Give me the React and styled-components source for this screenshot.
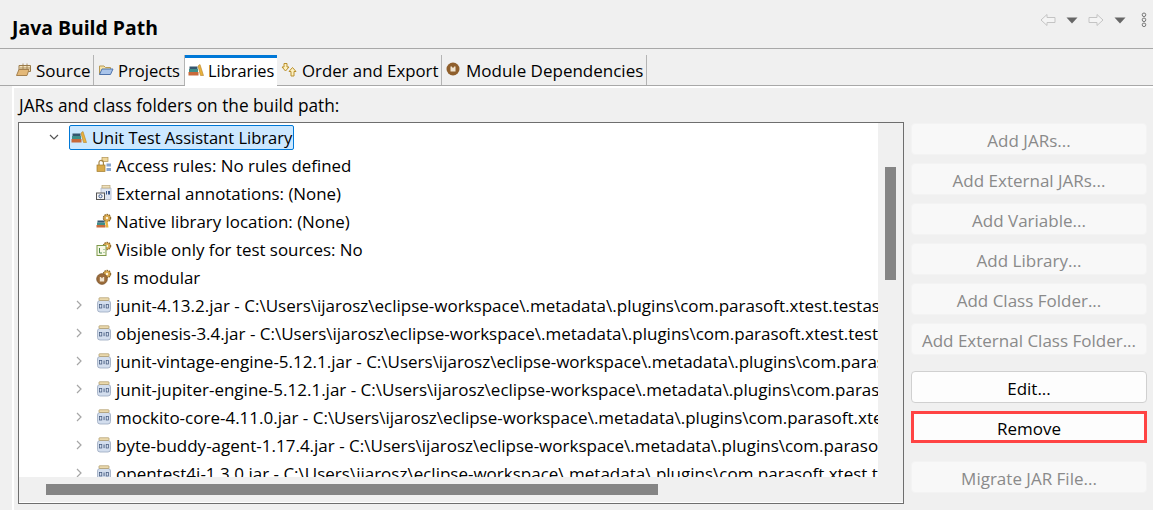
import React from "react";
import styled, { createGlobalStyle } from "styled-components";

const GlobalStyle = createGlobalStyle`
    html, body {
        margin: 0;
        padding: 0;
        background: #f0f0f0;
    }
    body {
        font-family: "Open Sans", "Noto Sans", sans-serif;
        color: #000;
    }
`;

// icons
const BooksIcon = () => (
    <svg width="16" height="16" viewBox="0 0 16 16">
        <rect x="0.5" y="10" width="10" height="3.5" fill="#c8693a" />
        <rect x="1" y="7" width="9" height="3" fill="#3f8f8a" />
        <rect x="1.5" y="4.5" width="8" height="2.5" fill="#35566f" />
        <path d="M10 4 L12 2.5 L15.5 13.5 L12.5 13.5 Z" fill="#e9b23c" stroke="#b5822a" strokeWidth="0.6" />
    </svg>
);

const SourceIcon = () => (
    <svg width="16" height="16" viewBox="0 0 16 16">
        <path d="M3 3.5 H14.5 V9.5 H3 Z" fill="#f6e3bd" stroke="#9a7b4a" />
        <path d="M7 1.5 V7 M11 1.5 V7 M4 6 H14" stroke="#9a7b4a" strokeWidth="0.8" />
        <path d="M0.5 13.5 L3 7.5 H13 L11 13.5 Z" fill="#e3b878" stroke="#a5814f" />
    </svg>
);

const FolderIcon = () => (
    <svg width="16" height="16" viewBox="0 0 16 16">
        <path d="M1.5 12.5 V4 H6 L7.5 5.5 H12.5 V7" fill="#f6e3a8" stroke="#b99a52" />
        <path d="M1.5 12.5 L4 7 H15 L12.5 12.5 Z" fill="#a9c4ea" stroke="#4f74ac" />
    </svg>
);

const OrderIcon = () => (
    <svg width="17" height="16" viewBox="0 0 17 16">
        <path d="M3 1.5 H6 V5 H8 L4.5 9 L1 5 H3 Z" fill="#fdf0bf" stroke="#b98f2c" />
        <path d="M11.5 5.5 L15 9.5 H13 V14 H10 V9.5 H8 Z" fill="#fdf0bf" stroke="#b98f2c" />
    </svg>
);

const ModuleIcon = () => (
    <svg width="16" height="16" viewBox="0 0 16 16">
        <circle cx="7" cy="7" r="6.5" fill="#8f5f2c" />
        <path d="M4.5 9.5 V4.5 H5.8 L7 6.2 L8.2 4.5 H9.5 V9.5" fill="#efe3cf" />
    </svg>
);

const GearBadge = () => (
    <g>
        <circle cx="11" cy="5" r="3.6" fill="#d9a94e" stroke="#8f6c31" strokeWidth="1.3" strokeDasharray="1.5 0.8" />
        <circle cx="11" cy="5" r="1.2" fill="#fff6df" />
    </g>
);

const RulesIcon = () => (
    <svg width="16" height="16" viewBox="0 0 16 16">
        <rect x="6" y="0.5" width="6" height="4" fill="#f0d79a" stroke="#b09252" strokeWidth="0.7" />
        <rect x="10.5" y="6.5" width="4.5" height="3" fill="#8aa6cf" />
        <rect x="10.5" y="11" width="4.5" height="3" fill="#8aa6cf" />
        <path d="M3 8 V5.5 A2.2 2.2 0 0 1 7.4 5.5 V8" fill="none" stroke="#a8894b" strokeWidth="1.2" />
        <rect x="1" y="8" width="8" height="6.5" fill="#d9aa4a" stroke="#a27c2e" strokeWidth="0.7" />
    </svg>
);

const AnnotationIcon = () => (
    <svg width="16" height="16" viewBox="0 0 16 16">
        <path d="M5 3 H15 V14.5 H5 Z" fill="#dfe6f2" stroke="#aeb9cc" strokeWidth="0.8" />
        <rect x="6" y="0.5" width="8" height="2.5" fill="#efe0bb" stroke="#bba676" strokeWidth="0.7" />
        <rect x="10" y="6" width="1" height="3.5" fill="#39568a" />
        <rect x="12" y="6" width="2" height="3.5" fill="#39568a" />
        <rect x="0.5" y="8" width="8" height="6.5" fill="#f4f4f4" stroke="#555" strokeWidth="1" />
        <circle cx="4.5" cy="11.2" r="1.6" fill="none" stroke="#39568a" strokeWidth="0.9" />
    </svg>
);

const NativeIcon = () => (
    <svg width="16" height="16" viewBox="0 0 16 16">
        <GearBadge />
        <rect x="0.5" y="12" width="9" height="2.5" fill="#c8693a" />
        <rect x="1" y="9.5" width="8" height="2.5" fill="#3f8f8a" />
        <rect x="1.5" y="7.5" width="7" height="2" fill="#35566f" />
        <path d="M9 8.5 L11.5 8 L12.5 14.5 L10 14.5 Z" fill="#e9b23c" />
    </svg>
);

const VisibleIcon = () => (
    <svg width="16" height="16" viewBox="0 0 16 16">
        <GearBadge />
        <rect x="1" y="4.5" width="9" height="10" fill="#f7f8e6" stroke="#7f9a4b" />
        <path d="M3.5 7 V12 H6 M8 8 V8.8 M8 11 V11.8" stroke="#4d8a4a" fill="none" />
    </svg>
);

const ModularIcon = () => (
    <svg width="16" height="16" viewBox="0 0 16 16">
        <GearBadge />
        <circle cx="6" cy="10" r="5.4" fill="#9a6b3a" stroke="#6e4a25" strokeWidth="0.6" />
        <path d="M3.8 12.5 V8 H5 L6 9.5 L7 8 H8.2 V12.5" fill="#efe3cf" />
    </svg>
);

const JarIcon = () => (
    <svg width="16" height="16" viewBox="0 0 16 16">
        <rect x="1.5" y="3.5" width="13" height="11.5" rx="2.5" fill="#d3deee" stroke="#9aa8bf" strokeWidth="0.8" />
        <rect x="3" y="0.8" width="10" height="2.6" rx="0.6" fill="#f0dfb4" stroke="#a8925e" strokeWidth="0.7" />
        <rect x="3.6" y="7.6" width="2.2" height="3.4" fill="none" stroke="#3d5378" strokeWidth="0.7" />
        <rect x="7.6" y="7.5" width="0.9" height="3.6" fill="#3d5378" />
        <rect x="10.2" y="7.6" width="2.2" height="3.4" fill="none" stroke="#3d5378" strokeWidth="0.7" />
    </svg>
);

const Chevron = ({ open }) => (
    <svg width="10" height="10" viewBox="0 0 10 10">
        <path
            d={open ? "M1 3 L5 7 L9 3" : "M3 1 L7 5 L3 9"}
            fill="none"
            stroke={open ? "#555" : "#a6a6a6"}
            strokeWidth="1.2"
        />
    </svg>
);

const ArrowLeft = () => (
    <svg width="16" height="14" viewBox="0 0 16 14">
        <path d="M1 7 L7 1.5 V4.5 H15 V9.5 H7 V12.5 Z" fill="#f4f4f4" stroke="#c4c4c4" />
    </svg>
);

const ArrowRight = () => (
    <svg width="16" height="14" viewBox="0 0 16 14">
        <path d="M15 7 L9 1.5 V4.5 H1 V9.5 H9 V12.5 Z" fill="#f4f4f4" stroke="#c4c4c4" />
    </svg>
);

const Caret = () => (
    <svg width="12" height="7" viewBox="0 0 12 7">
        <path d="M0.5 0.5 H11.5 L6 6.5 Z" fill="#666" />
    </svg>
);

const MoreIcon = () => (
    <svg width="6" height="16" viewBox="0 0 6 16">
        <circle cx="3" cy="2.8" r="1.8" fill="none" stroke="#777" />
        <circle cx="3" cy="7.8" r="1.8" fill="none" stroke="#777" />
        <circle cx="3" cy="12.8" r="1.8" fill="none" stroke="#777" />
    </svg>
);

// data
const tabs = [
    { label: "Source", icon: <SourceIcon />, width: 82, size: 17 },
    { label: "Projects", icon: <FolderIcon />, width: 91, size: 16.6 },
    { label: "Libraries", icon: <BooksIcon />, width: 92, size: 16.4, active: true },
    { label: "Order and Export", icon: <OrderIcon />, width: 165, size: 16.8 },
    { label: "Module Dependencies", icon: <ModuleIcon />, width: 205, size: 17 },
];

const attributes = [
    { label: "Access rules: No rules defined", icon: <RulesIcon /> },
    { label: "External annotations: (None)", icon: <AnnotationIcon /> },
    { label: "Native library location: (None)", icon: <NativeIcon /> },
    { label: "Visible only for test sources: No", icon: <VisibleIcon /> },
    { label: "Is modular", icon: <ModularIcon /> },
];

const base = "C:\\Users\\ijarosz\\eclipse-workspace\\.metadata\\.plugins\\com.parasoft.xtest.testassistant\\lib";
const jars = [
    "junit-4.13.2.jar",
    "objenesis-3.4.jar",
    "junit-vintage-engine-5.12.1.jar",
    "junit-jupiter-engine-5.12.1.jar",
    "mockito-core-4.11.0.jar",
    "byte-buddy-agent-1.17.4.jar",
    "opentest4j-1.3.0.jar",
];

const App = () => {
    return (
        <Page>
            <GlobalStyle />
            <Header>
                <Title>Java Build Path</Title>
                <HeaderTools>
                    <ArrowLeft />
                    <Caret />
                    <ArrowRight />
                    <Caret />
                    <MoreWrap>
                        <MoreIcon />
                    </MoreWrap>
                </HeaderTools>
            </Header>
            <TabStrip>
                {tabs.map((tab) => (
                    <Tab key={tab.label} $active={tab.active} $width={tab.width} $size={tab.size}>
                        <TabIcon>{tab.icon}</TabIcon>
                        {tab.label}
                    </Tab>
                ))}
            </TabStrip>
            <Panel>
                <Caption>JARs and class folders on the build path:</Caption>
                <Columns>
                    <TreeBox>
                        <TreeRows>
                            <Row>
                                <Expander $left={30} $right={10}>
                                    <Chevron open />
                                </Expander>
                                <Selection>
                                    <BooksIcon />
                                    Unit Test Assistant Library
                                </Selection>
                            </Row>
                            {attributes.map((item) => (
                                <ChildRow key={item.label}>
                                    <RowIcon>{item.icon}</RowIcon>
                                    {item.label}
                                </ChildRow>
                            ))}
                            {jars.map((jar) => (
                                <JarRow key={jar}>
                                    <Expander $left={55} $right={12}>
                                        <Chevron />
                                    </Expander>
                                    <RowIcon>
                                        <JarIcon />
                                    </RowIcon>
                                    {jar} - {base}
                                </JarRow>
                            ))}
                        </TreeRows>
                        <VerticalTrack>
                            <VerticalThumb />
                        </VerticalTrack>
                        <HorizontalTrack>
                            <HorizontalThumb />
                        </HorizontalTrack>
                        <Corner />
                    </TreeBox>
                    <ButtonColumn>
                        <ActionButton disabled>Add JARs...</ActionButton>
                        <ActionButton disabled>Add External JARs...</ActionButton>
                        <ActionButton disabled>Add Variable...</ActionButton>
                        <ActionButton disabled>Add Library...</ActionButton>
                        <ActionButton disabled>Add Class Folder...</ActionButton>
                        <ActionButton disabled>Add External Class Folder...</ActionButton>
                        <ActionButton $gap={8}>Edit...</ActionButton>
                        <ActionButton $outlined>Remove</ActionButton>
                        <ActionButton disabled $gap={10}>Migrate JAR File...</ActionButton>
                    </ButtonColumn>
                </Columns>
            </Panel>
        </Page>
    );
};
export default App;

const Page = styled.div`
    width: 1153px;
    height: 510px;
    overflow: hidden;
    background: #f0f0f0;
    display: flex;
    flex-direction: column;
`;

const Header = styled.div`
    height: 48px;
    flex: none;
    box-sizing: content-box;
    border-bottom: 1px solid #a8a8a8;
    padding: 0 6px 0 12px;
    display: flex;
    align-items: center;
    justify-content: space-between;
`;

const Title = styled.div`
    font-size: 19.4px;
    font-weight: 700;
    padding-top: 6px;
`;

const HeaderTools = styled.div`
    display: flex;
    align-items: center;
    gap: 10px;
    margin-bottom: 8px;
`;

const MoreWrap = styled.span`
    display: flex;
    margin-left: 5px;
`;

const TabStrip = styled.div`
    height: 30px;
    margin-top: 6px;
    padding-left: 12px;
    flex: none;
    display: flex;
    align-items: stretch;
    border-bottom: 1px solid #a8a8a8;
    position: relative;
    z-index: 1;
`;

const Tab = styled.div`
    width: ${(props) => props.$width}px;
    box-sizing: border-box;
    display: flex;
    align-items: center;
    gap: 4px;
    padding-left: 4px;
    font-size: ${(props) => props.$size}px;
    white-space: nowrap;
    overflow: hidden;
    border-right: 1px solid #b4b4b4;
    background: ${(props) => (props.$active ? "#fff" : "transparent")};
    ${(props) =>
        props.$active &&
        `
        border-top: 3px solid #0078d7;
        border-right: none;
        margin-bottom: -3px;
        padding-left: 3px;
        padding-bottom: 6px;
    `}
`;

const TabIcon = styled.span`
    display: flex;
    flex: none;
`;

const Panel = styled.div`
    flex: 1;
    min-height: 0;
    margin-left: 12px;
    border-top: 2px solid #fff;
    border-left: 2px solid #fff;
    padding: 6px 6px 6px 4px;
    display: flex;
    flex-direction: column;
`;

const Caption = styled.div`
    font-size: 17.25px;
    height: 28px;
    line-height: 24px;
    margin-left: 1px;
    white-space: nowrap;
`;

const Columns = styled.div`
    flex: 1;
    min-height: 0;
    display: flex;
    gap: 7px;
`;

const TreeBox = styled.div`
    width: 886px;
    flex: none;
    box-sizing: border-box;
    border: 1px solid #6e6e6e;
    background: #fff;
    display: grid;
    grid-template-columns: 859px 25px;
    grid-template-rows: 354px 25px;
`;

const TreeRows = styled.div`
    overflow: hidden;
    background: #fff;
    font-size: 16.9px;
`;

const Row = styled.div`
    height: 28px;
    display: flex;
    align-items: center;
    white-space: nowrap;
`;

const ChildRow = styled(Row)`
    padding-left: 77px;
`;

const JarRow = styled(Row)`
    font-size: 17px;
`;

const Expander = styled.span`
    display: flex;
    flex: none;
    width: 10px;
    margin-left: ${(props) => props.$left}px;
    margin-right: ${(props) => props.$right}px;
`;

const Selection = styled.div`
    height: 25px;
    box-sizing: border-box;
    background: #cce8ff;
    border: 1px solid #0078d7;
    border-radius: 2px;
    display: flex;
    align-items: center;
    gap: 5px;
    padding: 0 1px;
    font-size: 16.5px;
`;

const RowIcon = styled.span`
    display: flex;
    flex: none;
    margin-right: 4px;
`;

const VerticalTrack = styled.div`
    background: #f0f0f0;
    padding-top: 44px;
    display: flex;
    justify-content: center;
`;

const VerticalThumb = styled.div`
    width: 11px;
    height: 113px;
    background: #858585;
`;

const HorizontalTrack = styled.div`
    background: #f0f0f0;
    padding: 7px 0 0 27px;
`;

const HorizontalThumb = styled.div`
    width: 612px;
    height: 11px;
    background: #858585;
`;

const Corner = styled.div`
    background: #f0f0f0;
`;

const ButtonColumn = styled.div`
    width: 236px;
    flex: none;
    display: flex;
    flex-direction: column;
    gap: 8px;
    padding-top: 1px;
`;

const ActionButton = styled.button`
    height: 32px;
    flex: none;
    box-sizing: border-box;
    margin: 0;
    margin-top: ${(props) => props.$gap || 0}px;
    padding: 2px 0 0;
    font-family: inherit;
    font-size: 17px;
    color: #000;
    background: #fdfdfd;
    border: 1px solid #d0d0d0;
    border-radius: 4px;
    ${(props) =>
        props.$outlined &&
        `
        border: 3px solid #ff4444;
        border-radius: 0;
    `}
    &:disabled {
        color: #8a8a8a;
        background: #f8f8f8;
        border-color: #f3f3f3;
    }
`;
